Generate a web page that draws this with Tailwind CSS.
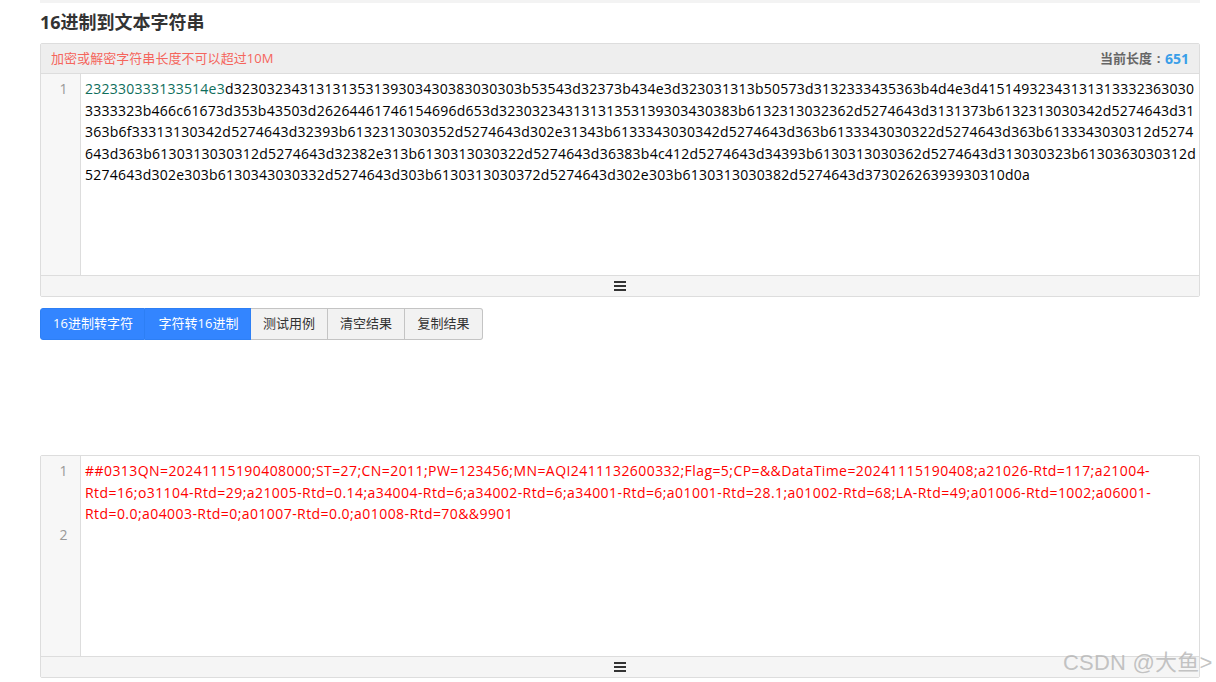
<!DOCTYPE html>
<html lang="zh">
<head>
    <meta charset="UTF-8">
    <title>16进制到文本字符串</title>
    <script src="https://cdn.jsdelivr.net/npm/@tailwindcss/browser@4"></script>
</head>
<body class="bg-white overflow-hidden h-[682px] relative font-['Open_Sans','Noto_Sans_CJK_SC',sans-serif] text-[#333]">
    <div class="mx-10 w-[1160px]">
        <div class="h-[3px] bg-[#f3f3f3]"></div>
        <h1 class="mt-[7px] h-[24px] leading-[24px] text-[18px] font-bold text-[#333]">16进制到文本字符串</h1>

        <!-- 输入 -->
        <div class="mt-[9px] h-[254px] border border-[#ddd] rounded-[2px] flex flex-col">
            <div class="h-[30px] bg-[#eee] border-b border-[#ddd] flex items-center justify-between pl-[10px] pr-[10px] text-[13px]">
                <span class="tracking-[0.05px] text-[#f5655c]">加密或解密字符串长度不可以超过10M</span>
                <span class="font-bold text-[#666] flex items-center">当前长度<span class="w-[13px] text-center">:</span><span class="text-[14px] text-[#3a9ee8]">651</span></span>
            </div>
            <div class="flex flex-1">
                <div class="w-[40px] bg-[#f7f7f7] border-r border-[#ddd] pr-[12.5px] pt-[4px] text-right text-[14px] leading-[21.6px] text-[#999]">1</div>
                <div class="flex-1 pl-[4px] pt-[4px] text-[14px] leading-[21.6px] tracking-[0.235px] text-black whitespace-nowrap overflow-hidden">
                    <div><span class="text-[#0f6e5c]">232330333133514e3</span>d32303234313131353139303430383030303b53543d32373b434e3d323031313b50573d3132333435363b4d4e3d41514932343131313332363030</div>
                    <div>3333323b466c61673d353b43503d26264461746154696d653d32303234313131353139303430383b6132313032362d5274643d3131373b6132313030342d5274643d31</div>
                    <div>363b6f33313130342d5274643d32393b6132313030352d5274643d302e31343b6133343030342d5274643d363b6133343030322d5274643d363b6133343030312d5274</div>
                    <div>643d363b6130313030312d5274643d32382e313b6130313030322d5274643d36383b4c412d5274643d34393b6130313030362d5274643d313030323b6130363030312d</div>
                    <div>5274643d302e303b6130343030332d5274643d303b6130313030372d5274643d302e303b6130313030382d5274643d37302626393930310d0a</div>
                </div>
            </div>
            <div class="h-[21px] bg-[#f5f5f5] border-t border-[#ddd] flex items-center justify-center">
                <svg width="12" height="10" viewBox="0 0 12 10"><path d="M0 0h12v2H0zM0 4h12v2H0zM0 8h12v2H0z" fill="#333"/></svg>
            </div>
        </div>

        <!-- 按钮 -->
        <div class="mt-[11px] flex h-[32px] text-[13px]">
            <button class="w-[105px] pl-[1px] bg-[#3385ff] border border-[#2d7ff5] text-white rounded-l-[3px]">16进制转字符</button>
            <button class="w-[106px] pl-[2px] bg-[#3385ff] border border-[#2d7ff5] border-l-0 text-white">字符转16进制</button>
            <button class="w-[77px] bg-[#f2f2f2] border border-[#c4c4c4] border-l-0">测试用例</button>
            <button class="w-[77px] bg-[#f2f2f2] border border-[#c4c4c4] border-l-0">清空结果</button>
            <button class="w-[78px] bg-[#f2f2f2] border border-[#c4c4c4] border-l-0 rounded-r-[3px]">复制结果</button>
        </div>

        <!-- 输出 -->
        <div class="mt-[115px] h-[223px] border border-[#ddd] rounded-[2px] flex flex-col">
            <div class="flex flex-1">
                <div class="w-[40px] bg-[#f7f7f7] border-r border-[#ddd] pr-[12.5px] pt-[4px] text-right text-[14px] leading-[21.6px] text-[#999]">
                    <div class="h-[64px]">1</div>
                    <div>2</div>
                </div>
                <div class="flex-1 pl-[4px] pt-[4px] text-[14px] leading-[21.6px] tracking-[0.43px] text-[#f00] whitespace-nowrap overflow-hidden">
                    <div>##0313QN=20241115190408000;ST=27;CN=2011;PW=123456;MN=AQI2411132600332;Flag=5;CP=&amp;&amp;DataTime=20241115190408;a21026-Rtd=117;a21004-</div>
                    <div>Rtd=16;o31104-Rtd=29;a21005-Rtd=0.14;a34004-Rtd=6;a34002-Rtd=6;a34001-Rtd=6;a01001-Rtd=28.1;a01002-Rtd=68;LA-Rtd=49;a01006-Rtd=1002;a06001-</div>
                    <div>Rtd=0.0;a04003-Rtd=0;a01007-Rtd=0.0;a01008-Rtd=70&amp;&amp;9901</div>
                </div>
            </div>
            <div class="h-[21px] bg-[#f5f5f5] border-t border-[#ddd] flex items-center justify-center">
                <svg width="12" height="10" viewBox="0 0 12 10"><path d="M0 0h12v2H0zM0 4h12v2H0zM0 8h12v2H0z" fill="#333"/></svg>
            </div>
        </div>
    </div>

    <!-- 水印 -->
    <div class="absolute left-[1063px] top-[650px] text-[22px] tracking-[0.2px] leading-[26px] whitespace-nowrap text-[#b4b4b4]/80 font-['Liberation_Sans','Noto_Sans_CJK_SC',sans-serif]">CSDN @大鱼&gt;</div>
</body>
</html>
